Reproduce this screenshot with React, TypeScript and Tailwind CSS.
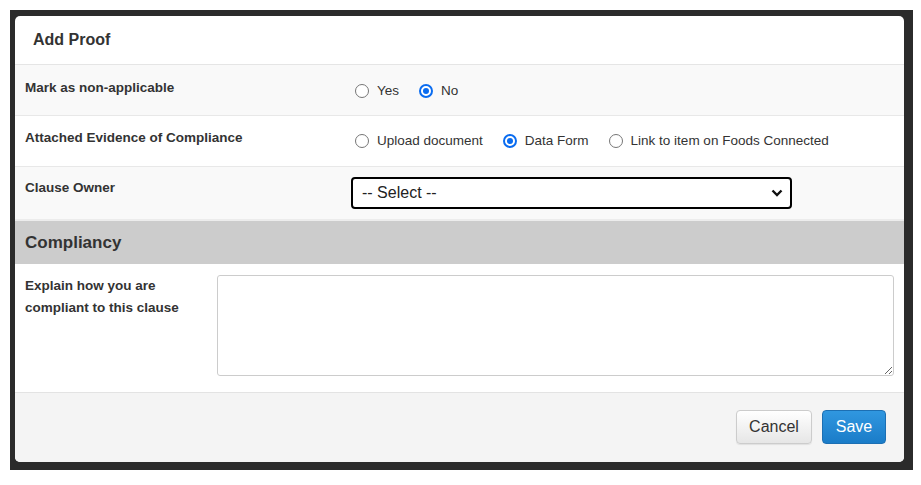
import React from "react";

function Radio({ checked, label }: { checked?: boolean; label: string }) {
  return (
    <label className="flex items-center">
      {checked ? (
        <span className="flex h-[14px] w-[14px] items-center justify-center rounded-full border-[2px] border-[#0a6cf0] bg-white">
          <span className="h-[6px] w-[6px] rounded-full bg-[#0a6cf0]" />
        </span>
      ) : (
        <span className="h-[14px] w-[14px] rounded-full border border-[#767676] bg-white" />
      )}
      <span className="ml-[8px] text-[13.5px] leading-[20px] text-[#333]">{label}</span>
    </label>
  );
}

export default function App() {
  return (
    <div className="min-h-[485px] w-[921px] bg-white p-[10px]" style={{ fontFamily: '"Liberation Sans", Arial, sans-serif' }}>
      <div className="h-[460px] w-[903px] bg-[#2b2b2b] pb-[8px] pl-[5px] pr-[9px] pt-[6px]">
        <div className="flex h-[446px] w-[889px] flex-col overflow-hidden rounded-[5px] bg-white">
          <div className="flex h-[49px] items-center border-b border-[#e5e5e5] pl-[18px]">
            <span className="text-[16px] font-bold text-[#333]" style={{ fontWeight: 600 }}>Add Proof</span>
          </div>
          <div className="flex h-[51px] border-b border-[#e8e8e8] bg-[#f9f9f9]">
            <div className="w-[340px] pl-[10px] pt-[13px] text-[13.5px] font-bold leading-[20px] text-[#333]">Mark as non-applicable</div>
            <div className="flex items-start gap-[20px] pt-[16px]">
              <Radio label="Yes" />
              <Radio checked label="No" />
            </div>
          </div>
          <div className="flex h-[51px] border-b border-[#e8e8e8] bg-white">
            <div className="w-[340px] pl-[10px] pt-[12px] text-[13.5px] font-bold leading-[20px] text-[#333]">Attached Evidence of Compliance</div>
            <div className="flex items-start gap-[20px] pt-[15px]">
              <Radio label="Upload document" />
              <Radio checked label="Data Form" />
              <Radio label="Link to item on Foods Connected" />
            </div>
          </div>
          <div className="flex h-[54px] border-b-2 border-[#ececec] bg-[#f9f9f9]">
            <div className="w-[336px] pl-[10px] pt-[11px] text-[13.5px] font-bold leading-[20px] text-[#333]">Clause Owner</div>
            <div className="pt-[10px]">
              <div className="flex h-[32px] w-[441px] items-center justify-between rounded-[4px] border-2 border-black bg-white pl-[9px] pr-[6px]">
                <span className="text-[16px] text-[#222]">-- Select --</span>
                <svg width="12" height="8" viewBox="0 0 12 8" className="mr-[1px]">
                  <path d="M1.5 1.5 L6 6 L10.5 1.5" fill="none" stroke="#111" strokeWidth="2.4" />
                </svg>
              </div>
            </div>
          </div>
          <div className="flex h-[43px] items-center bg-[#cccccc] pl-[10px]">
            <span className="text-[17px] font-bold text-[#333]">Compliancy</span>
          </div>
          <div className="flex h-[129px] border-b border-[#e3e3e3] bg-white">
            <div className="w-[202px] pl-[10px] pt-[11px] text-[13.5px] font-bold leading-[22px] text-[#333]">
              Explain how you are
              <br />
              compliant to this clause
            </div>
            <div className="pt-[11px]">
              <textarea className="block h-[101px] w-[677px] resize rounded-[3px] border border-[#cccccc] bg-white outline-none" />
            </div>
          </div>
          <div className="flex flex-1 items-start justify-end gap-[10px] bg-[#f4f4f4] pr-[18px] pt-[17px]">
            <button className="h-[34px] w-[76px] rounded-[4px] border border-[#cccccc] bg-gradient-to-b from-white to-[#e6e6e6] text-[16px] text-[#333] shadow-[0_1px_1px_rgba(0,0,0,0.08)]">
              Cancel
            </button>
            <button className="h-[34px] w-[64px] rounded-[4px] border border-[#1c6fb3] bg-gradient-to-b from-[#3097e0] to-[#1a7cc8] text-[16px] text-white">
              Save
            </button>
          </div>
        </div>
      </div>
    </div>
  );
}
